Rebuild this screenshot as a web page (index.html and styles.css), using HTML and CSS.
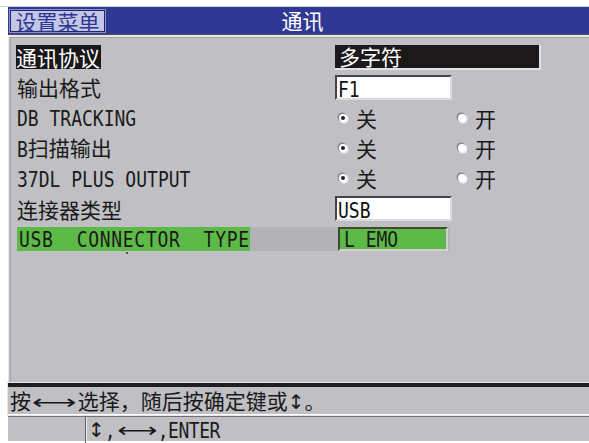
FILE: index.html
```html
<!DOCTYPE html>
<html lang="zh">
<head>
<meta charset="utf-8">
<title>通讯</title>
<link rel="stylesheet" href="styles.css">
</head>
<body>
<div class="screen">
  <div class="topstrip"></div>
  <div class="topbar">
    <div class="menu-btn">设置菜单</div>
    <div class="title">通讯</div>
    <div class="spacer"></div>
  </div>
  <div class="panel">
    <div class="panel-inner">
      <div class="row">
        <div class="label"><span class="sel">通讯协议</span></div>
        <div class="value"><div class="box dark">多字符</div></div>
      </div>
      <div class="row">
        <div class="label">输出格式</div>
        <div class="value"><div class="box white short"><span class="lat">F1</span></div></div>
      </div>
      <div class="row">
        <div class="label"><span class="lat">DB TRACKING</span></div>
        <div class="value radios">
          <span class="opt"><span class="radio on"></span>关</span>
          <span class="opt"><span class="radio"></span>开</span>
        </div>
      </div>
      <div class="row">
        <div class="label"><span class="lat">B</span>扫描输出</div>
        <div class="value radios">
          <span class="opt"><span class="radio on"></span>关</span>
          <span class="opt"><span class="radio"></span>开</span>
        </div>
      </div>
      <div class="row">
        <div class="label"><span class="lat">37DL PLUS OUTPUT</span></div>
        <div class="value radios">
          <span class="opt"><span class="radio on"></span>关</span>
          <span class="opt"><span class="radio"></span>开</span>
        </div>
      </div>
      <div class="row">
        <div class="label">连接器类型</div>
        <div class="value"><div class="box white short"><span class="lat">USB</span></div></div>
      </div>
      <div class="row">
        <div class="hl-bar">
          <div class="hl-label"><span class="lat wide">USB&nbsp;&nbsp;CONNECTOR&nbsp;&nbsp;TYPE</span></div>
          <div class="hl-gap"></div>
          <div class="hl-value"><span class="lat">L EMO</span></div>
        </div>
        <span class="dot"></span>
      </div>
    </div>
  </div>
  <div class="help">按<span class="arr">⟷</span>选择，随后按确定键或<span class="ud">↕</span>。</div>
  <div class="keys">
    <div class="keys-l"></div>
    <div class="keys-r"><span class="ud">↕</span><span class="lat">,</span><span class="arr sm">⟷</span><span class="lat">,ENTER</span></div>
  </div>
</div>
</body>
</html>
```

FILE: styles.css
```css
html, body {
  margin: 0;
  padding: 0;
  background: #ffffff;
}
body {
  width: 589px;
  height: 443px;
  overflow: hidden;
  font-family: "Noto Sans CJK SC", "DejaVu Sans", sans-serif;
  color: #1a1a1a;
}
.screen {
  margin-left: 8px;
  width: 581px;
}
.topstrip {
  height: 6px;
  border-bottom: 1px solid #cfcfd2;
  margin-left: -8px;
  width: 589px;
}
.topbar {
  height: 27px;
  background: #2f3892;
  display: grid;
  grid-template-columns: 1fr auto 1fr;
  align-items: center;
  border-bottom: 1px solid #4c4c52;
}
.menu-btn {
  justify-self: start;
  margin-left: 2px;
  height: 22px;
  width: 95px;
  box-sizing: border-box;
  background: #c3c6e4;
  border: 1px solid #1e2570;
  outline: 1px solid #8c92c8;
  color: #2c3592;
  font-size: 21px;
  line-height: 21px;
  text-align: center;
}
.title {
  color: #ffffff;
  font-size: 21px;
  line-height: 27px;
  padding-left: 8px;
}
.panel {
  height: 347px;
  background: #c0c0c4;
  border-top: 2px solid #e6e6e8;
  border-left: 1px solid #e6e6e8;
  box-sizing: border-box;
}
.panel-inner {
  height: 100%;
  border-top: 1px solid #a4a4a8;
  border-left: 1px solid #a4a4a8;
  margin-left: 1px;
  box-sizing: border-box;
  padding: 4px 0 0 6px;
}
.row {
  height: 30.3px;
  display: grid;
  grid-template-columns: 318px 1fr;
  align-items: center;
  position: relative;
}
.label {
  font-size: 21px;
  line-height: 24px;
  white-space: nowrap;
}
.lat {
  display: inline-block;
  font-family: "DejaVu Sans Mono", "Liberation Mono", monospace;
  font-size: 18px;
  letter-spacing: 0;
  transform: scaleY(1.22);
  white-space: pre;
}
.lat.wide {
  letter-spacing: 0.7px;
}
.sel {
  display: inline-block;
  background: #1a1718;
  color: #ffffff;
  height: 24px;
  line-height: 24px;
  padding: 0 1px 0 0;
  margin-left: -1px;
}
.box {
  height: 25px;
  box-sizing: border-box;
  line-height: 22px;
  padding-left: 4px;
  font-size: 21px;
}
.box.dark {
  width: 206px;
  background: #1c191a;
  color: #ffffff;
  border-right: 2px solid #e2e2e4;
  border-bottom: 2px solid #e2e2e4;
}
.box.white {
  background: #ffffff;
  color: #111;
  border-top: 2px solid #444448;
  border-left: 2px solid #444448;
  border-right: 2px solid #dcdcdf;
  border-bottom: 2px solid #dcdcdf;
  padding-left: 1px;
  line-height: 21px;
}
.box.short {
  width: 117px;
}
.radios {
  display: flex;
  font-size: 21px;
  line-height: 24px;
}
.opt {
  display: flex;
  align-items: center;
  width: 115px;
  padding-left: 4px;
}
.radio {
  width: 8px;
  height: 8px;
  border-radius: 50%;
  background: #ffffff;
  box-shadow: -1px -1px 0 0.5px #8a8a8e, 1px 1px 0 0.5px #eeeeee;
  margin-right: 9px;
  position: relative;
}
.radio.on::after {
  content: "";
  position: absolute;
  left: 2px;
  top: 2px;
  width: 4px;
  height: 4px;
  border-radius: 50%;
  background: #222;
}
.hl-bar {
  grid-column: 1 / 3;
  display: flex;
  align-items: center;
  width: 433px;
  height: 24px;
  background: #b3b3b7;
  margin-top: 1px;
}
.hl-label {
  width: 233px;
  height: 24px;
  background: #5dba48;
  line-height: 24px;
  padding-left: 2px;
  box-sizing: border-box;
  white-space: nowrap;
  overflow: hidden;
}
.hl-gap {
  width: 88px;
}
.hl-value {
  width: 110px;
  height: 24px;
  box-sizing: border-box;
  background: #5dba48;
  border-top: 2px solid #3f4a30;
  border-left: 2px solid #3f4a30;
  border-right: 2px solid #d0d0d3;
  border-bottom: 2px solid #d0d0d3;
  line-height: 20px;
  padding-left: 4px;
}
.dot {
  position: absolute;
  left: 109px;
  top: 28px;
  width: 2px;
  height: 2px;
  background: #555;
}
.help {
  height: 27px;
  background: #c0c0c4;
  font-size: 21px;
  line-height: 27px;
  padding-left: 2px;
  border-top: 4px solid #1e1e20;
  border-bottom: 1px solid #ffffff;
  margin-top: 1px;
  outline: 1px solid #e6e6e8;
  white-space: nowrap;
}
.arr {
  font-family: "DejaVu Sans", sans-serif;
  display: inline-block;
  font-size: 20px;
  transform: scaleX(1.55);
  margin: 0 9px;
}
.arr.sm {
  transform: scaleX(1.4);
  margin: 0 6px 0 8px;
}
.ud {
  font-family: "DejaVu Sans", sans-serif;
  font-size: 20px;
}
.keys {
  border-top: 2px solid #707074;
  display: grid;
  grid-template-columns: 78px 1fr;
  height: 24px;
  background: #c0c0c4;
}
.keys-l {
  border-right: 1px solid #606064;
}
.keys-r {
  border-left: 1px solid #f0f0f0;
  font-size: 20px;
  line-height: 24px;
  padding-left: 1px;
  white-space: nowrap;
}
.keys-r .lat {
  letter-spacing: -0.5px;
}
```
